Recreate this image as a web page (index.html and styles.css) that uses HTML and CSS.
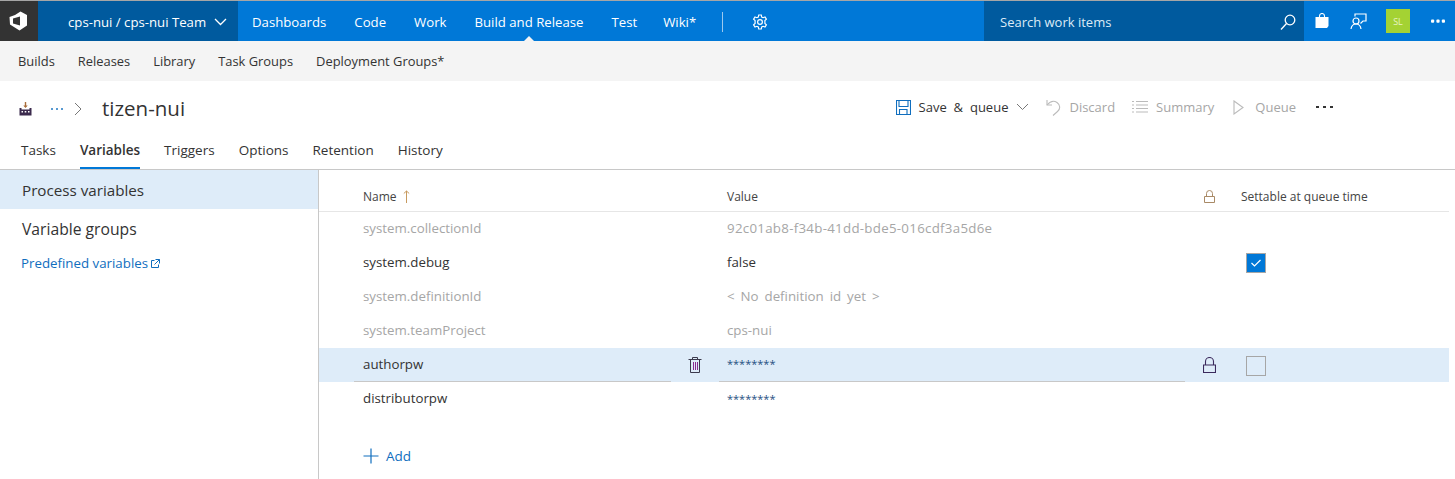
FILE: index.html
```html
<!DOCTYPE html>
<html lang="en">
<head>
    <meta charset="UTF-8">
    <title>tizen-nui - Variables</title>
    <link rel="stylesheet" href="styles.css">
</head>
<body>
    <header class="top-nav">
        <div class="logo-box">
            <svg width="20" height="20" viewBox="0 0 20 20"><path fill-rule="evenodd" d="M11.5 0.5 L18 4 V14.5 L10.5 19.5 L1 13.5 L0.5 6 L6 4 Z M4 7.5 V12.5 L11 14.5 V5.5 Z" fill="#fff"/></svg>
        </div>
        <div class="project-box">
            <span>cps-nui / cps-nui Team</span>
            <svg width="13" height="8" viewBox="0 0 13 8"><path d="M1 1 L6.5 6.5 L12 1" fill="none" stroke="#fff" stroke-width="1.3"/></svg>
        </div>
        <nav class="hub-links">
            <a class="hub-link">Dashboards</a>
            <a class="hub-link">Code</a>
            <a class="hub-link">Work</a>
            <a class="hub-link hub-link-active">Build and Release</a>
            <a class="hub-link hub-link-tight">Test</a>
            <a class="hub-link">Wiki*</a>
            <span class="hub-divider"></span>
            <svg class="gear-icon" width="16" height="16" viewBox="0 0 16 16" fill="none" stroke="#fff" stroke-width="1.2"><path d="M6.7 1 H9.3 L9.7 3 L11.1 3.7 L13 3 L14.4 5.2 L12.9 6.6 V9.4 L14.4 10.8 L13 13 L11.1 12.3 L9.7 13 L9.3 15 H6.7 L6.3 13 L4.9 12.3 L3 13 L1.6 10.8 L3.1 9.4 V6.6 L1.6 5.2 L3 3 L4.9 3.7 L6.3 3 Z"/><circle cx="8" cy="8" r="2.4"/></svg>
        </nav>
        <div class="search-box">
            <span>Search work items</span>
            <svg width="16" height="17" viewBox="0 0 16 17" fill="none" stroke="#fff" stroke-width="1.3"><circle cx="10" cy="6" r="4.8"/><path d="M6.5 9.5 L1 15.5"/></svg>
        </div>
        <div class="top-icons">
            <svg width="14" height="16" viewBox="0 0 14 16"><path d="M4.5 4 V3 A2.5 2.5 0 0 1 9.5 3 V4" fill="none" stroke="#fff" stroke-width="1.1"/><path d="M0.5 4 H13.5 V13 L12 15 H0.5 Z" fill="#fff"/></svg>
            <svg class="feedback-icon" width="17" height="17" viewBox="0 0 17 17" fill="none" stroke="#fff" stroke-width="1.2"><path d="M5 3.5 V1 H16 V8 H13 L10.5 10.5"/><circle cx="6" cy="8" r="3"/><path d="M1 16 C1.5 12.5 3.5 11 6 11 C8.5 11 10.5 12.5 11 16"/></svg>
            <span class="avatar">SL</span>
            <svg class="more-icon" width="14" height="4" viewBox="0 0 14 4" fill="#fff"><rect y="0.5" width="3.2" height="3.2" rx="1"/><rect x="5.4" y="0.5" width="3.2" height="3.2" rx="1"/><rect x="10.8" y="0.5" width="3.2" height="3.2" rx="1"/></svg>
        </div>
    </header>

    <div class="sub-nav">
        <a>Builds</a>
        <a>Releases</a>
        <a>Library</a>
        <a>Task Groups</a>
        <a>Deployment Groups*</a>
    </div>

    <div class="title-bar">
        <div class="crumbs">
            <svg width="13" height="14" viewBox="0 0 13 14"><path d="M6.5 0 V5" stroke="#a86d3a" stroke-width="1.4"/><path d="M4.3 3.5 L6.5 6 L8.7 3.5 Z" fill="#a86d3a"/><path d="M0.5 6 H2.5 V7.5 H10.5 V6 H12.5 V13.5 H0.5 Z" fill="#3b2a4d"/><path d="M2.5 9 H4 V10.5 H2.5 Z M5.7 9 H7.3 V10.5 H5.7 Z M9 9 H10.5 V10.5 H9 Z" fill="#fff"/></svg>
            <span class="crumb-dots">
                <i></i><i></i><i></i>
            </span>
            <svg width="8" height="14" viewBox="0 0 8 14"><path d="M1 1 L7 7 L1 13" fill="none" stroke="#777" stroke-width="1"/></svg>
            <h1 class="def-name">tizen-nui</h1>
        </div>
        <div class="toolbar">
            <span class="tool">
                <svg width="15" height="15" viewBox="0 0 15 15" fill="none" stroke="#106ebe" stroke-width="1.1"><path d="M0.5 0.5 H14.5 V14.5 H0.5 Z"/><path d="M3 0.5 V6.5 H12 V0.5"/><path d="M3.5 14.5 V9.5 H11 V14.5"/></svg>
                <span class="tool-label-dark">Save &amp; queue</span>
                <svg class="tool-caret" width="13" height="8" viewBox="0 0 13 8"><path d="M1 1 L6.5 6.5 L12 1" fill="none" stroke="#777" stroke-width="1"/></svg>
            </span>
            <span class="tool tool-discard">
                <svg width="15" height="17" viewBox="0 0 15 17" fill="none" stroke="#bbb" stroke-width="1.1"><path d="M1 1 V6 H6"/><path d="M1 6 C4 2.5 8 1.5 11 3.5 C14.5 6 14.5 10 11.5 12.5 L7 16.5"/></svg>
                <span>Discard</span>
            </span>
            <span class="tool tool-summary">
                <svg width="16" height="12" viewBox="0 0 16 12" stroke="#bbb" stroke-width="1"><path d="M0 0.5 H2 M4 0.5 H16 M0 4 H2 M4 4 H16 M0 7.5 H2 M4 7.5 H16 M0 11 H2 M4 11 H16"/></svg>
                <span>Summary</span>
            </span>
            <span class="tool tool-queue">
                <svg width="11" height="15" viewBox="0 0 11 15" fill="none" stroke="#bbb" stroke-width="1.1"><path d="M1 1 L10 7.5 L1 14 Z"/></svg>
                <span>Queue</span>
            </span>
            <span class="tool-more">
                <i></i><i></i><i></i>
            </span>
        </div>
    </div>

    <div class="tabs">
        <a>Tasks</a>
        <a class="tab-active">Variables</a>
        <a>Triggers</a>
        <a>Options</a>
        <a>Retention</a>
        <a>History</a>
    </div>

    <div class="content">
        <aside class="side-panel">
            <div class="side-item side-item-selected">Process variables</div>
            <div class="side-item side-item-plain">Variable groups</div>
            <a class="side-link">Predefined variables<svg width="9" height="9" viewBox="0 0 9 9" fill="none" stroke="#106ebe" stroke-width="1"><path d="M3.5 1.5 H0.5 V8.5 H7.5 V5.5"/><path d="M4.5 0.5 H8.5 V4.5 M8.5 0.5 L3.5 5.5"/></svg></a>
        </aside>
        <main class="var-panel">
            <div class="var-row var-head">
                <div class="cell-name">Name <svg width="7" height="13" viewBox="0 0 7 13" fill="none" stroke="#c79a5f" stroke-width="1"><path d="M3.5 13 V1 M0.8 3.5 L3.5 1 L6.2 3.5"/></svg></div>
                <div></div>
                <div class="cell-value">Value</div>
                <div class="cell-lock">
                    <svg width="11" height="13" viewBox="0 0 11 13" fill="none" stroke="#a98a66" stroke-width="1"><path d="M0.5 6.5 H10.5 V12.5 H0.5 Z"/><path d="M2.5 6.5 V3.5 A3 3 0 0 1 8.5 3.5 V6.5"/></svg>
                </div>
                <div class="cell-check">Settable at queue time</div>
            </div>
            <div class="var-row var-muted">
                <div class="cell-name">system.collectionId</div>
                <div></div>
                <div class="cell-value cell-guid">92c01ab8-f34b-41dd-bde5-016cdf3a5d6e</div>
            </div>
            <div class="var-row">
                <div class="cell-name">system.debug</div>
                <div></div>
                <div class="cell-value">false</div>
                <div class="cell-lock"></div>
                <div class="cell-check">
                    <span class="checkbox checkbox-on">
                        <svg width="12" height="10" viewBox="0 0 12 10" fill="none" stroke="#fff" stroke-width="1.2"><path d="M1.5 5 L4.5 8 L10.5 2"/></svg>
                    </span>
                </div>
            </div>
            <div class="var-row var-muted">
                <div class="cell-name">system.definitionId</div>
                <div></div>
                <div class="cell-value cell-wide-words">&lt; No definition id yet &gt;</div>
            </div>
            <div class="var-row var-muted">
                <div class="cell-name">system.teamProject</div>
                <div></div>
                <div class="cell-value">cps-nui</div>
            </div>
            <div class="var-row var-selected">
                <div class="cell-name cell-edit">authorpw</div>
                <div class="cell-del">
                    <svg width="14" height="16" viewBox="0 0 14 16" fill="none" stroke="#3b3a4d" stroke-width="1"><path d="M0.5 2.5 H13.5 M4.5 2.5 V0.5 H9.5 V2.5 M2.5 2.5 V15.5 H11.5 V2.5"/><path d="M5.5 5 V13 M7.5 5 V13 M9.5 5 V13" stroke="#8a2a92"/></svg>
                </div>
                <div class="cell-value cell-edit cell-secret">********</div>
                <div class="cell-lock">
                    <svg class="lock-row" width="13" height="16" viewBox="0 0 13 16" fill="none" stroke="#3b2a5d" stroke-width="1.1"><path d="M0.5 8 H12.5 V15.5 H0.5 Z"/><path d="M2.5 8 V4.5 A4 4 0 0 1 10.5 4.5 V8"/></svg>
                </div>
                <div class="cell-check"><span class="checkbox"></span></div>
            </div>
            <div class="var-row">
                <div class="cell-name">distributorpw</div>
                <div></div>
                <div class="cell-value cell-secret">********</div>
            </div>
            <a class="add-btn">
                <svg width="16" height="16" viewBox="0 0 16 16" stroke="#106ebe" stroke-width="1.2"><path d="M8 0.5 V15.5 M0.5 8 H15.5"/></svg>
                <span>Add</span>
            </a>
        </main>
    </div>
</body>
</html>
```

FILE: styles.css
```css
html, body {
    height: 100%;
}
body {
    margin: 0;
    padding: 0;
    font-family: "Open Sans", "Noto Sans", Arial, sans-serif;
    font-size: 13px;
    color: #333;
    background: #fff;
    overflow: hidden;
}
svg {
    display: block;
    flex: none;
}

/* top bar */
.top-nav {
    display: flex;
    height: 40px;
    background: #0078d7;
    border-top: 1px solid #a6a6a6;
    color: #fff;
    font-size: 13.2px;
}
.logo-box {
    width: 38px;
    background: #333;
    display: flex;
    align-items: center;
    justify-content: center;
}
.project-box {
    width: 200px;
    box-sizing: border-box;
    padding: 2px 0 0 30px;
    background: #005a9e;
    display: flex;
    align-items: center;
    gap: 8px;
    white-space: nowrap;
}
.hub-links {
    width: 746px;
    box-sizing: border-box;
    padding: 2px 0 0 14px;
    display: flex;
    align-items: center;
    white-space: nowrap;
}
.hub-link {
    position: relative;
    margin-right: 28px;
}
.hub-link-tight {
    margin-right: 26px;
}
.hub-link-active::after {
    content: "";
    position: absolute;
    left: 50%;
    bottom: -11px;
    margin-left: -6px;
    border: 6px solid transparent;
    border-top: 0;
    border-bottom-color: #f4f4f4;
}
.hub-divider {
    width: 1px;
    height: 20px;
    margin-left: -2px;
    background: #9cc9ee;
}
.gear-icon {
    margin-left: 29px;
}
.search-box {
    width: 320px;
    box-sizing: border-box;
    padding: 2px 8px 0 16px;
    background: #005a9e;
    display: flex;
    align-items: center;
    justify-content: space-between;
    color: #dcebf7;
    font-size: 13px;
}
.top-icons {
    flex: 1;
    display: flex;
    align-items: center;
    padding-left: 11px;
}
.feedback-icon {
    margin-left: 21px;
}
.avatar {
    width: 24px;
    height: 24px;
    margin-left: 19px;
    background: #a4d233;
    color: #e8f3c4;
    font-size: 9px;
    display: flex;
    align-items: center;
    justify-content: center;
}
.more-icon {
    margin-left: 21px;
}

/* second level nav */
.sub-nav {
    height: 40px;
    background: #f4f4f4;
    padding-left: 18px;
    display: flex;
    align-items: center;
    gap: 23px;
    white-space: nowrap;
    font-size: 12.9px;
}

/* definition title and toolbar */
.title-bar {
    height: 49px;
    display: flex;
    align-items: center;
    justify-content: space-between;
    box-sizing: border-box;
    padding: 5px 122px 0 19px;
}
.crumbs {
    display: flex;
    align-items: center;
    margin-top: 1px;
}
.crumb-dots {
    display: flex;
    gap: 3px;
    margin: 0 11px 0 19px;
}
.crumb-dots i {
    width: 2px;
    height: 2px;
    background: #106ebe;
    opacity: 0.7;
}
.def-name {
    margin: 0 0 0 20px;
    padding-bottom: 2px;
    font-size: 20.5px;
    font-weight: 400;
    line-height: 28px;
}
.toolbar {
    display: flex;
    align-items: center;
    margin-top: -2px;
    color: #a6a6a6;
}
.tool {
    display: flex;
    align-items: center;
    gap: 8px;
}
.tool-label-dark {
    color: #333;
    word-spacing: 3.5px;
}
.tool-discard {
    margin-left: 17px;
}
.tool-summary {
    margin-left: 17px;
}
.tool-queue {
    margin-left: 19px;
    gap: 11px;
}
.tool-more {
    display: flex;
    gap: 4px;
    margin-left: 20px;
}
.tool-more i {
    width: 3px;
    height: 2px;
    background: #333;
}

/* tabs */
.tabs {
    height: 40px;
    box-sizing: border-box;
    border-bottom: 1px solid #c8c8c8;
    padding-left: 21px;
    display: flex;
    gap: 24px;
    white-space: nowrap;
    font-size: 13.5px;
}
.tabs a {
    line-height: 40px;
    height: 39px;
}
.tab-active {
    font-weight: 600;
    box-shadow: inset 0 -2px 0 #0078d7;
}

/* left panel */
.content {
    display: flex;
    height: 310px;
}
.side-panel {
    width: 318px;
    border-right: 1px solid #c8c8c8;
    font-size: 15.2px;
}
.side-item {
    height: 39px;
    line-height: 40px;
    padding-left: 22px;
    white-space: nowrap;
}
.side-item-selected {
    background: #deecf9;
}
.side-item-plain {
    font-size: 15.7px;
}
.side-link {
    display: flex;
    align-items: center;
    gap: 3px;
    padding-left: 21px;
    margin-top: 6px;
    font-size: 13.3px;
    color: #106ebe;
    white-space: nowrap;
}

/* variables table */
.var-panel {
    width: 1130px;
    font-size: 13.3px;
}
.var-row {
    display: grid;
    grid-template-columns: 35px 317px 48px 466px 56px 208px;
    height: 34px;
    box-sizing: border-box;
    padding-bottom: 2px;
    align-items: center;
    white-space: nowrap;
}
.var-row > :first-child {
    grid-column: 2;
}
.var-head {
    height: 42px;
    padding: 12px 0 0;
    border-bottom: 1px solid #e6e6e6;
    font-size: 12px;
    color: #444;
}
.var-muted {
    color: #a6a6a6;
}
.cell-name {
    padding-left: 9px;
    display: flex;
    align-items: center;
    gap: 6px;
}
.cell-value {
    padding-left: 8px;
}
.cell-guid {
    letter-spacing: 0.28px;
}
.cell-wide-words {
    word-spacing: 2.5px;
}
.cell-lock {
    padding-left: 19px;
}
.lock-row {
    margin-left: -1px;
}
.var-selected {
    background: #deecf9;
    padding-bottom: 0;
}
.cell-edit {
    height: 34px;
    line-height: 31px;
    box-sizing: border-box;
    border-bottom: 1px solid #c8c8c8;
}
.cell-secret {
    color: #1f4f7f;
    font-size: 11px;
}
.cell-del {
    justify-self: center;
}
.checkbox {
    width: 18px;
    height: 18px;
    margin-left: 5px;
    border: 1px solid #a6a6a6;
    display: flex;
    align-items: center;
    justify-content: center;
}
.checkbox-on {
    background: #0078d7;
}
.var-row .checkbox {
    position: relative;
    top: 1px;
}
.add-btn {
    display: flex;
    align-items: center;
    gap: 7px;
    margin: 31px 0 0 44px;
    color: #106ebe;
    font-size: 13.5px;
}
```
